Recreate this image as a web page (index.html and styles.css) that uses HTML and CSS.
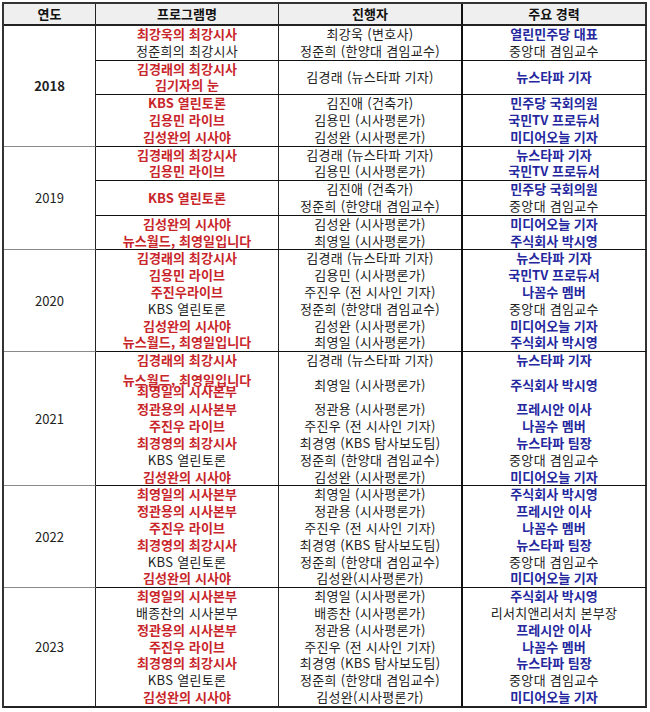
FILE: index.html
```html
<!DOCTYPE html>
<html lang="ko">
<head>
<meta charset="utf-8">
<title>시사 프로그램 진행자</title>
<link rel="stylesheet" href="styles.css">
</head>
<body>
<table class="sheet">
  <colgroup>
    <col class="c1"><col class="c2"><col class="c3"><col class="c4">
  </colgroup>
  <thead>
    <tr><th>연도</th><th>프로그램명</th><th class="thick">진행자</th><th class="last">주요 경력</th></tr>
  </thead>
  <tbody>
    <!-- 2018 -->
    <tr>
      <td rowspan="3" class="year bold">2018</td>
      <td><div class="ln r">최강욱의 최강시사</div><div class="ln">정준희의 최강시사</div></td>
      <td class="thick"><div class="ln">최강욱 (변호사)</div><div class="ln">정준희 (한양대 겸임교수)</div></td>
      <td class="last"><div class="ln u">열린민주당 대표</div><div class="ln">중앙대 겸임교수</div></td>
    </tr>
    <tr>
      <td><div class="ln r">김경래의 최강시사</div><div class="ln r">김기자의 눈</div></td>
      <td class="thick"><div class="ln">김경래 (뉴스타파 기자)</div></td>
      <td class="last"><div class="ln u">뉴스타파 기자</div></td>
    </tr>
    <tr>
      <td><div class="ln r">KBS 열린토론</div><div class="ln r">김용민 라이브</div><div class="ln r">김성완의 시사야</div></td>
      <td class="thick"><div class="ln">김진애 (건축가)</div><div class="ln">김용민 (시사평론가)</div><div class="ln">김성완 (시사평론가)</div></td>
      <td class="last"><div class="ln u">민주당 국회의원</div><div class="ln u">국민TV 프로듀서</div><div class="ln u">미디어오늘 기자</div></td>
    </tr>
    <!-- 2019 -->
    <tr>
      <td rowspan="3" class="year">2019</td>
      <td><div class="ln r">김경래의 최강시사</div><div class="ln r">김용민 라이브</div></td>
      <td class="thick"><div class="ln">김경래 (뉴스타파 기자)</div><div class="ln">김용민 (시사평론가)</div></td>
      <td class="last"><div class="ln u">뉴스타파 기자</div><div class="ln u">국민TV 프로듀서</div></td>
    </tr>
    <tr>
      <td><div class="ln r">KBS 열린토론</div></td>
      <td class="thick"><div class="ln">김진애 (건축가)</div><div class="ln">정준희 (한양대 겸임교수)</div></td>
      <td class="last"><div class="ln u">민주당 국회의원</div><div class="ln">중앙대 겸임교수</div></td>
    </tr>
    <tr>
      <td><div class="ln r">김성완의 시사야</div><div class="ln r">뉴스월드, 최영일입니다</div></td>
      <td class="thick"><div class="ln">김성완 (시사평론가)</div><div class="ln">최영일 (시사평론가)</div></td>
      <td class="last"><div class="ln u">미디어오늘 기자</div><div class="ln u">주식회사 박시영</div></td>
    </tr>
    <!-- 2020 -->
    <tr>
      <td class="year">2020</td>
      <td>
        <div class="ln r">김경래의 최강시사</div>
        <div class="ln r">김용민 라이브</div>
        <div class="ln r">주진우라이브</div>
        <div class="ln">KBS 열린토론</div>
        <div class="ln r">김성완의 시사야</div>
        <div class="ln r">뉴스월드, 최영일입니다</div>
      </td>
      <td class="thick">
        <div class="ln">김경래 (뉴스타파 기자)</div>
        <div class="ln">김용민 (시사평론가)</div>
        <div class="ln">주진우 (전 시사인 기자)</div>
        <div class="ln">정준희 (한양대 겸임교수)</div>
        <div class="ln">김성완 (시사평론가)</div>
        <div class="ln">최영일 (시사평론가)</div>
      </td>
      <td class="last">
        <div class="ln u">뉴스타파 기자</div>
        <div class="ln u">국민TV 프로듀서</div>
        <div class="ln u">나꼼수 멤버</div>
        <div class="ln">중앙대 겸임교수</div>
        <div class="ln u">미디어오늘 기자</div>
        <div class="ln u">주식회사 박시영</div>
      </td>
    </tr>
    <!-- 2021 -->
    <tr>
      <td class="year">2021</td>
      <td>
        <div class="ln r">김경래의 최강시사</div>
        <div class="ln pair r"><span>뉴스월드, 최영일입니다</span><span>최영일의 시사본부</span></div>
        <div class="ln r">정관용의 시사본부</div>
        <div class="ln r">주진우 라이브</div>
        <div class="ln r">최경영의 최강시사</div>
        <div class="ln">KBS 열린토론</div>
        <div class="ln r">김성완의 시사야</div>
      </td>
      <td class="thick">
        <div class="ln">김경래 (뉴스타파 기자)</div>
        <div class="ln tall">최영일 (시사평론가)</div>
        <div class="ln">정관용 (시사평론가)</div>
        <div class="ln">주진우 (전 시사인 기자)</div>
        <div class="ln">최경영 (KBS 탐사보도팀)</div>
        <div class="ln">정준희 (한양대 겸임교수)</div>
        <div class="ln">김성완 (시사평론가)</div>
      </td>
      <td class="last">
        <div class="ln u">뉴스타파 기자</div>
        <div class="ln tall u">주식회사 박시영</div>
        <div class="ln u">프레시안 이사</div>
        <div class="ln u">나꼼수 멤버</div>
        <div class="ln u">뉴스타파 팀장</div>
        <div class="ln">중앙대 겸임교수</div>
        <div class="ln u">미디어오늘 기자</div>
      </td>
    </tr>
    <!-- 2022 -->
    <tr>
      <td class="year">2022</td>
      <td>
        <div class="ln r">최영일의 시사본부</div>
        <div class="ln r">정관용의 시사본부</div>
        <div class="ln r">주진우 라이브</div>
        <div class="ln r">최경영의 최강시사</div>
        <div class="ln">KBS 열린토론</div>
        <div class="ln r">김성완의 시사야</div>
      </td>
      <td class="thick">
        <div class="ln">최영일 (시사평론가)</div>
        <div class="ln">정관용 (시사평론가)</div>
        <div class="ln">주진우 (전 시사인 기자)</div>
        <div class="ln">최경영 (KBS 탐사보도팀)</div>
        <div class="ln">정준희 (한양대 겸임교수)</div>
        <div class="ln">김성완(시사평론가)</div>
      </td>
      <td class="last">
        <div class="ln u">주식회사 박시영</div>
        <div class="ln u">프레시안 이사</div>
        <div class="ln u">나꼼수 멤버</div>
        <div class="ln u">뉴스타파 팀장</div>
        <div class="ln">중앙대 겸임교수</div>
        <div class="ln u">미디어오늘 기자</div>
      </td>
    </tr>
    <!-- 2023 -->
    <tr class="end">
      <td class="year">2023</td>
      <td>
        <div class="ln r">최영일의 시사본부</div>
        <div class="ln">배종찬의 시사본부</div>
        <div class="ln r">정관용의 시사본부</div>
        <div class="ln r">주진우 라이브</div>
        <div class="ln r">최경영의 최강시사</div>
        <div class="ln">KBS 열린토론</div>
        <div class="ln r">김성완의 시사야</div>
      </td>
      <td class="thick">
        <div class="ln">최영일 (시사평론가)</div>
        <div class="ln">배종찬 (시사평론가)</div>
        <div class="ln">정관용 (시사평론가)</div>
        <div class="ln">주진우 (전 시사인 기자)</div>
        <div class="ln">최경영 (KBS 탐사보도팀)</div>
        <div class="ln">정준희 (한양대 겸임교수)</div>
        <div class="ln">김성완(시사평론가)</div>
      </td>
      <td class="last">
        <div class="ln u">주식회사 박시영</div>
        <div class="ln">리서치앤리서치 본부장</div>
        <div class="ln u">프레시안 이사</div>
        <div class="ln u">나꼼수 멤버</div>
        <div class="ln u">뉴스타파 팀장</div>
        <div class="ln">중앙대 겸임교수</div>
        <div class="ln u">미디어오늘 기자</div>
      </td>
    </tr>
  </tbody>
</table>
</body>
</html>
```

FILE: styles.css
```css
html, body {
  background: #ffffff;
}

body {
  margin: 0;
  padding: 2px 0 0 2px;
  font-family: "Noto Sans CJK KR", "Noto Sans", sans-serif;
  font-size: 13px;
  color: #222222;
}

.sheet {
  border-collapse: separate;
  border-spacing: 0;
  table-layout: fixed;
  width: 645px;
  border-top: 2px solid #333333;
  border-left: 2px solid #333333;
}

.c1 { width: 92px; }
.c2 { width: 183px; }
.c3 { width: 184px; }
.c4 { width: 184px; }

.sheet th,
.sheet td {
  padding: 0;
  text-align: center;
  vertical-align: middle;
  border-right: 1px solid #222222;
  border-bottom: 1px solid #111111;
}

.sheet th {
  height: 20px;
  line-height: 20px;
  font-weight: 700;
  color: #111111;
  background: #efefef;
  border-bottom: 2px solid #222222;
}

.sheet .thick {
  border-right: 2px solid #111111;
}

.sheet .last {
  border-right: 2px solid #333333;
}

.sheet .year {
  border-bottom-color: #8a8a8a;
}

.sheet .end td {
  border-bottom: 2px solid #222222;
}

.bold {
  font-weight: 700;
}

.ln {
  line-height: 16.8px;
  white-space: nowrap;
  letter-spacing: 0.3px;
}

.r {
  color: #c8262b;
  font-weight: 700;
  letter-spacing: 0.1px;
}

.u {
  color: #25289e;
  font-weight: 700;
  letter-spacing: 0;
}

.tall {
  line-height: 32.4px;
}

.pair {
  height: 32.4px;
  display: flex;
  flex-direction: column;
  justify-content: center;
  align-items: center;
  line-height: 11.5px;
}
```
